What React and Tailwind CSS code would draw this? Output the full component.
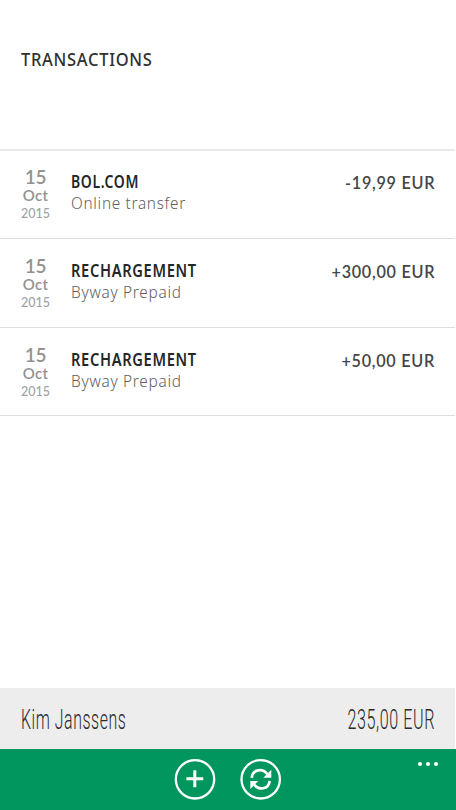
const transactions = [
  { id: 1, title: "BOL.COM", detail: "Online transfer", amount: "-19,99 EUR", height: "h-[88px]", titleScale: "scale-x-[0.82]", detailScale: "scale-x-[0.9]" },
  { id: 2, title: "RECHARGEMENT", detail: "Byway Prepaid", amount: "+300,00 EUR", height: "h-[89px] pt-px", titleScale: "scale-x-[0.86]", detailScale: "scale-x-[0.905]" },
  { id: 3, title: "RECHARGEMENT", detail: "Byway Prepaid", amount: "+50,00 EUR", height: "h-[88px] pt-px", titleScale: "scale-x-[0.86]", detailScale: "scale-x-[0.905]" },
];

function TransactionRow({ item }) {
  return (
    <li className={`flex border-b border-[#dedede] pr-[20px] pl-[21px] ${item.height}`}>
      <div className="flex w-[29px] shrink-0 flex-col items-center pt-[16px] font-['Lato',sans-serif] whitespace-nowrap">
        <span className="text-[19px] leading-[20px] font-semibold tracking-[-0.2px] text-[#929292]">15</span>
        <span className="text-[15px] leading-[17px] font-semibold tracking-[0.3px] text-[#929292]">Oct</span>
        <span className="text-[12.5px] leading-[19px] font-medium text-[#a2a2a2]">2015</span>
      </div>
      <div className="ml-[21px] flex-1 pt-[20px] whitespace-nowrap">
        <div className={`w-fit origin-left text-[17px] leading-[22px] font-semibold tracking-[0.8px] text-[#262626] ${item.titleScale}`}>
          {item.title}
        </div>
        <div className={`w-fit origin-left text-[17px] leading-[20px] font-light tracking-[0.8px] text-[#606060] ${item.detailScale}`}>
          {item.detail}
        </div>
      </div>
      <div className="h-fit origin-right scale-x-[0.9] pt-[20px] font-['Lato',sans-serif] text-[18px] leading-[22px] font-semibold tracking-[0.8px] whitespace-nowrap text-[#454545]">
        {item.amount}
      </div>
    </li>
  );
}

function AddIcon() {
  return (
    <svg width="42" height="42" viewBox="0 0 42 42" fill="none" stroke="#fff">
      <circle cx="21" cy="21.3" r="19.2" strokeWidth="2.3" />
      <path d="M20.8 12.3v17M12.3 20.8h17" strokeWidth="3" />
    </svg>
  );
}

function RefreshIcon() {
  return (
    <svg width="42" height="42" viewBox="0 0 42 42" fill="none" stroke="#fff">
      <circle cx="20.7" cy="21.3" r="19.2" strokeWidth="2.3" />
      <path d="M11.8 19.8C12.5 11 23 9.8 27.5 16.5" strokeWidth="2.7" />
      <path d="M29.6 22.8C28.9 31.6 18.4 32.8 13.9 26.1" strokeWidth="2.7" />
      <path d="M31.3 11.8v8h-8zM10.3 30.9v-8h8z" fill="#fff" stroke="none" />
    </svg>
  );
}

export default function App() {
  return (
    <div className="flex h-[810px] w-[456px] flex-col overflow-hidden bg-white font-['Noto_Sans',sans-serif]">
      <header className="mr-px h-[151px] shrink-0 border-b-2 border-[#e9e9e9] pt-[46px] pl-[21px]">
        <h1 className="w-fit origin-left scale-x-[0.89] text-[18.5px] leading-[25px] font-medium tracking-[0.8px] text-[#303030]">
          TRANSACTIONS
        </h1>
      </header>

      <ul className="mr-px flex-1">
        {transactions.map((item) => (
          <TransactionRow key={item.id} item={item} />
        ))}
      </ul>

      <div className="mr-px flex h-[61px] shrink-0 items-center justify-between bg-[#ededed] pt-[2px] pr-[20px] pl-[21px] font-['Roboto',sans-serif] text-[28px] font-[350] whitespace-nowrap text-[#2b2b2b]">
        <span className="origin-left scale-x-[0.567] tracking-[1px]">Kim Janssens</span>
        <span className="origin-right scale-x-[0.575] tracking-[1px]">235,00 EUR</span>
      </div>

      <footer className="relative flex h-[61px] shrink-0 items-start justify-center gap-[24px] bg-[#00965e] pt-[9px]">
        <button title="Add"><AddIcon /></button>
        <button title="Refresh"><RefreshIcon /></button>
        <div className="absolute top-[13px] right-[18px] flex gap-[4px]">
          <span className="size-[4px] rounded-full bg-white" />
          <span className="size-[4px] rounded-full bg-white" />
          <span className="size-[4px] rounded-full bg-white" />
        </div>
      </footer>
    </div>
  );
}
